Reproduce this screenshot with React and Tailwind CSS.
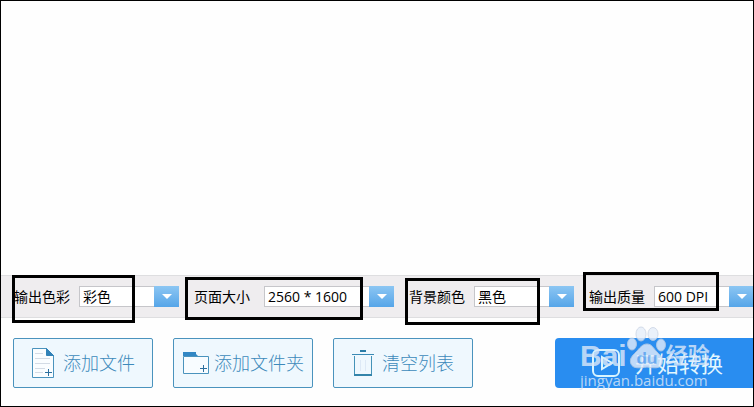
const FIELDS = [
  {
    id: 'color',
    label: '输出色彩',
    options: ['彩色', '灰色', '黑白'],
    gap: 'gap-[9px]',
    width: 'w-[100px]',
    frame: '-left-[2px] -top-[11px] w-[123px] h-[48px]',
  },
  {
    id: 'size',
    label: '页面大小',
    options: ['2560 * 1600', '1920 * 1080', '1280 * 720'],
    gap: 'gap-[14px]',
    width: 'w-[130px]',
    frame: '-left-[9px] -top-[9px] w-[178px] h-[43px]',
  },
  {
    id: 'background',
    label: '背景颜色',
    options: ['黑色', '白色'],
    gap: 'gap-[9px]',
    width: 'w-[100px]',
    frame: '-left-[4px] -top-[8px] w-[135px] h-[47px]',
  },
  {
    id: 'quality',
    label: '输出质量',
    options: ['600 DPI', '300 DPI', '150 DPI'],
    gap: 'gap-[9px]',
    width: 'w-[100px]',
    frame: '-left-[6px] -top-[14px] w-[136px] h-[39px]',
  },
];

const FileIcon = () => (
  <svg width="24" height="32" viewBox="0 0 24 32" fill="none" aria-hidden="true">
    <path d="M1.5 1.5H15.5L22.5 8.5V30.5H1.5Z" fill="#fafdff" stroke="#4a93bd" />
    <path d="M15.5 1.5V8.5H22.5Z" fill="#3182b8" stroke="#3182b8" />
    <path d="M4 6.5H12M4 11.5H19M4 16.5H19M4 21.5H14M4 25.5H12" stroke="#d3dbe5" />
    <path d="M17.5 22V29M14 25.5H21" stroke="#2c6f9e" />
  </svg>
);

const FolderIcon = () => (
  <svg width="28" height="24" viewBox="0 0 28 24" fill="none" aria-hidden="true">
    <path d="M1.5 5.5H26.5V22.5H1.5Z" fill="#f8fcff" stroke="#4a93bd" />
    <path d="M1 1H14V3L16 5H1Z" fill="#3287c4" />
    <path d="M21.5 14V21M18 17.5H25" stroke="#2c6f9e" />
  </svg>
);

const TrashIcon = () => (
  <svg width="22" height="28" viewBox="0 0 22 28" fill="none" aria-hidden="true">
    <path d="M8 2H14" stroke="#2b7ca6" strokeWidth="2" />
    <path d="M0 5.5H22" stroke="#3a8ab5" />
    <path d="M2.5 7V26M19.5 7V26" stroke="#4593b8" />
    <path d="M2 26H20" stroke="#3384aa" strokeWidth="2" />
    <path d="M8.5 11V22M13.5 11V22" stroke="#dde9f6" />
  </svg>
);

const PlayIcon = () => (
  <svg width="30" height="30" viewBox="0 0 30 30" fill="none" aria-hidden="true">
    <rect x="2" y="2" width="26" height="26" rx="5" stroke="#d9f5ff" strokeWidth="2" />
    <path d="M11 9L21 15L11 21Z" stroke="#d9f5ff" strokeWidth="2" />
  </svg>
);

const PawIcon = () => (
  <svg width="39" height="44" viewBox="0 0 39 44" aria-hidden="true">
    <g fill="#e6eefa" stroke="#c8d3e4" strokeWidth="1">
      <ellipse cx="14" cy="8" rx="5" ry="7" />
      <ellipse cx="26" cy="8" rx="5" ry="6.5" />
      <ellipse cx="5" cy="18" rx="4.5" ry="6" />
      <ellipse cx="34" cy="19" rx="4.5" ry="6" />
      <path d="M20 18C25 18 26 22 30 26C34 30 37 33 35 38C33 43 27 42 20 41C13 42 6 43 4 38C2 33 5 30 9 26C13 22 15 18 20 18Z" />
    </g>
    <text
      x="20"
      y="38"
      textAnchor="middle"
      fontSize="17"
      fontWeight="700"
      fontFamily="Liberation Sans, sans-serif"
      fill="#78b1f0"
    >
      du
    </text>
  </svg>
);

const SelectField = ({ field }) => (
  <div className={`relative flex shrink-0 items-center ${field.gap}`}>
    <label htmlFor={field.id} className="text-sm leading-5 whitespace-nowrap">
      {field.label}
    </label>
    <div className={`relative flex ${field.width}`}>
      <select
        id={field.id}
        className="h-[21px] w-full appearance-none border border-[#c6c6ca] bg-white pl-[3px] text-sm leading-5 text-black outline-none"
      >
        {field.options.map(option => (
          <option key={option}>{option}</option>
        ))}
      </select>
      <span className="pointer-events-none absolute inset-y-0 right-0 flex w-[25px] items-center justify-center bg-linear-to-b from-[#8cc6f3] to-[#55a5e8]">
        <svg width="10" height="5" viewBox="0 0 10 5" aria-hidden="true">
          <path d="M0 0H10L5 5Z" fill="#fff" />
        </svg>
      </span>
    </div>
    {/* Highlight frame around the field */}
    <span className={`pointer-events-none absolute border-3 border-black ${field.frame}`} />
  </div>
);

const ActionButton = ({ icon, gap, children }) => (
  <button
    type="button"
    className={`flex h-[50px] w-[140px] shrink-0 items-center justify-center rounded-xs border border-[#4a93bd] bg-[#eff8fe] text-lg font-light text-[#3d8abb] ${gap}`}
  >
    {icon}
    <span className="whitespace-nowrap">{children}</span>
  </button>
);

const Watermark = () => (
  <div className="pointer-events-none absolute right-[41px] bottom-4 w-[132px] text-[#dbe8f8] opacity-80">
    <div className="flex items-end">
      <span className="font-['Liberation_Sans'] text-[30px] leading-7 font-bold">Bai</span>
      <PawIcon />
      <span className="text-[22px] leading-8 font-bold whitespace-nowrap">经验</span>
    </div>
    <div className="text-[15px] leading-5 whitespace-nowrap">jingyan.baidu.com</div>
  </div>
);

const App = () => {
  return (
    <div className="flex min-h-screen flex-col overflow-hidden border border-black bg-[#fefefe] font-['Open_Sans','Noto_Sans_CJK_SC',sans-serif] text-black">
      <main className="flex-1" />

      <form className="flex items-center gap-[15px] border-y border-[#dedee0] bg-[#efedef] py-[10px] pl-[13px]">
        {FIELDS.map(field => (
          <SelectField key={field.id} field={field} />
        ))}
      </form>

      <footer className="relative flex items-center gap-5 pt-5 pb-[18px] pl-3">
        <ActionButton icon={<FileIcon />} gap="gap-2">添加文件</ActionButton>
        <ActionButton icon={<FolderIcon />} gap="gap-1">添加文件夹</ActionButton>
        <ActionButton icon={<TrashIcon />} gap="gap-2">清空列表</ActionButton>
        <button
          type="button"
          className="ml-auto flex h-[50px] w-[198px] shrink-0 items-center gap-[14px] rounded-l-sm bg-[#298df0] pl-9 text-[22px] text-[#e2f7ff]"
        >
          <PlayIcon />
          <span className="whitespace-nowrap">开始转换</span>
        </button>
        <Watermark />
      </footer>
    </div>
  );
};

export default App;
